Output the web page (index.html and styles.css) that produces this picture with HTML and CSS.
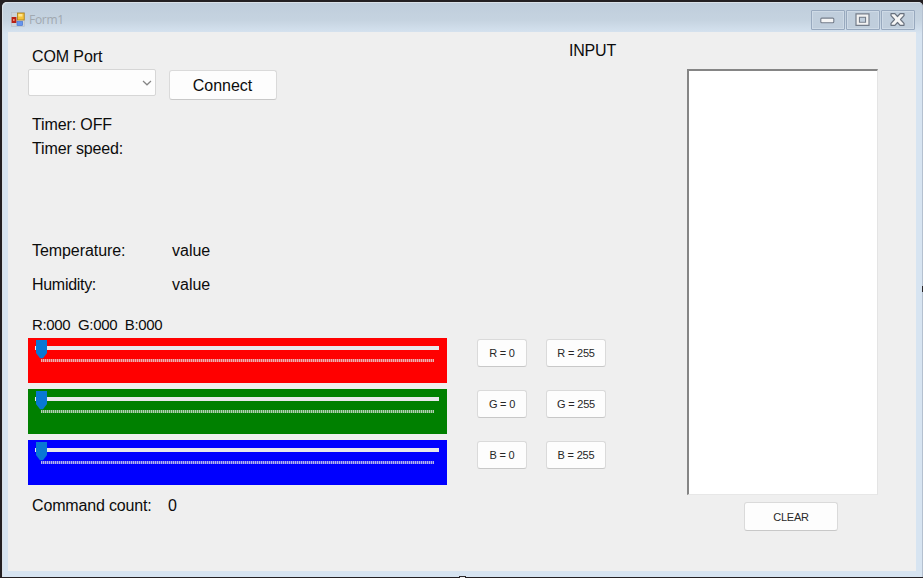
FILE: index.html
```html
<!DOCTYPE html>
<html lang="en">
<head>
<meta charset="utf-8">
<title>Form1</title>
<link rel="stylesheet" href="styles.css">
</head>
<body>
<main class="window">
  <header class="titlebar">
    <svg class="app-icon" width="14" height="15" viewBox="0 0 14 15">
      <rect x=".5" y=".5" width="13" height="14" fill="#ccd3d9" stroke="#b5bec8" stroke-width=".6"/>
      <rect x=".6" y="5" width="4.8" height="6" fill="#b92015"/><rect x="2" y="7" width="1.6" height="2" fill="#ee8b72"/>
      <rect x="6.4" y="1" width="6.8" height="7" fill="#f5c43b" stroke="#a97c17" stroke-width=".8"/><rect x="7.4" y="2" width="4" height="2.5" fill="#ffe58d"/>
      <rect x="6" y="9.5" width="5.6" height="4" fill="#6595ef" stroke="#3d6ed0" stroke-width=".6"/>
    </svg>
    <h1 class="title">Form1</h1>
    <div class="controls">
      <span class="control"><svg width="34" height="20" viewBox="0 0 34 20"><rect x="9.8" y="8.1" width="13" height="4.6" rx="1" fill="#f5f5f5" stroke="#747d8a" stroke-width="1.1"/></svg></span>
      <span class="control"><svg width="34" height="20" viewBox="0 0 34 20"><path d="M10 3.8h13v11.6H10z M13.5 7.3v4.8h6V7.3z" fill="#f2f2f2" fill-rule="evenodd" stroke="#747d8a" stroke-width="1.2"/><rect x="14" y="7.8" width="5" height="3.8" fill="#c0cedc"/></svg></span>
      <span class="control"><svg width="34" height="20" viewBox="0 0 34 20"><path d="M10 3.7h3.9l2.6 2.8 2.6-2.8H23v2l-3.5 3.8 3.5 3.8v2h-3.9l-2.6-2.8-2.6 2.8H10v-2l3.5-3.8L10 5.7z" fill="#f5f5f5" stroke="#68717e" stroke-width="1.2" stroke-linejoin="round"/></svg></span>
    </div>
  </header>
  <div class="client">
    <section class="left">
      <div class="port-row">
        <div class="port">
          <span class="label port-label">COM Port</span>
          <div class="combo"><svg width="10" height="6" viewBox="0 0 10 6"><path d="M1 1l4 3.8L9 1" fill="none" stroke="#858585" stroke-width="1.2"/></svg></div>
        </div>
        <button class="button connect">Connect</button>
      </div>
      <div class="timer">
        <span class="label timer-state">Timer: OFF</span>
        <span class="label timer-speed">Timer speed:</span>
      </div>
      <div class="sensors">
        <span class="label temperature">Temperature:</span><span class="label value">value</span>
        <span class="label humidity">Humidity:</span><span class="label value">value</span>
      </div>
      <div class="rgb">R:000&nbsp; G:000&nbsp; B:000</div>
      <div class="channels">
        <div class="channel">
          <div class="slider red"><div class="rail"></div><svg class="thumb" width="11" height="19" viewBox="0 0 11 19"><path d="M0 0h11v13l-4 5.3H4L0 13z" fill="#0878d4"/></svg><div class="ticks"></div></div>
          <button class="button small zero">R = 0</button><button class="button small full">R = 255</button>
        </div>
        <div class="channel">
          <div class="slider green"><div class="rail"></div><svg class="thumb" width="11" height="19" viewBox="0 0 11 19"><path d="M0 0h11v13l-4 5.3H4L0 13z" fill="#0878d4"/></svg><div class="ticks"></div></div>
          <button class="button small zero">G = 0</button><button class="button small full">G = 255</button>
        </div>
        <div class="channel">
          <div class="slider blue"><div class="rail"></div><svg class="thumb" width="11" height="19" viewBox="0 0 11 19"><path d="M0 0h11v13l-4 5.3H4L0 13z" fill="#0878d4"/></svg><div class="ticks"></div></div>
          <button class="button small zero">B = 0</button><button class="button small full">B = 255</button>
        </div>
      </div>
      <div class="count"><span class="label count-label">Command count:</span><span class="label">0</span></div>
    </section>
    <section class="right">
      <span class="label input-label">INPUT</span>
      <div class="textbox"></div>
      <button class="button clear">CLEAR</button>
    </section>
  </div>
  <i class="handle handle-right"></i>
  <i class="handle handle-bottom"></i>
</main>
</body>
</html>
```
FILE: styles.css
```css
* { box-sizing: border-box; }
body {
  margin: 0;
  width: 923px;
  height: 578px;
  overflow: hidden;
  background: #231f22;
  font-family: "Liberation Sans", Arial, sans-serif;
  color: #0c0c0c;
}
.window {
  position: relative;
  width: 921px;
  height: 575px;
  margin: 2px 0 0 2px;
  padding: 0 7px 6px 6px;
  border-radius: 5px 5px 0 0;
  background: linear-gradient(#bfcddb 0, #c5d3e0 18px, #d7e4f1 32px);
  box-shadow: inset 1px 1px #d9e0e7, inset -1px 0 #b4c0cf;
  display: flex;
  flex-direction: column;
}
.titlebar { height: 30px; flex: none; display: flex; align-items: flex-start; }
.app-icon { margin: 10px 0 0 3px; }
.title {
  margin: 9px 0 0 4px;
  font: 400 12px/18px "Open Sans", sans-serif;
  letter-spacing: -.3px;
  color: #a1a9b1;
}
.controls { display: flex; gap: 1px; margin: 8px 1px 0 auto; }
.control {
  width: 34px;
  height: 20px;
  border: 1px solid #98a9be;
  border-radius: 1px;
  box-shadow: inset 0 0 0 1px #cedae6;
  background: #c0cedc;
}
.control svg { display: block; margin: -1px; }
.client { height: 539px; display: flex; background: #efefef; }
.left { width: 600px; padding-left: 20px; flex: none; }
.label { font-size: 16px; line-height: 20px; white-space: nowrap; }
.port-row { height: 83px; display: flex; padding-top: 15px; }
.port { width: 128px; }
.port-label { display: block; margin-left: 4px; letter-spacing: -.1px; }
.combo {
  height: 27px;
  margin-top: 2px;
  display: flex;
  align-items: center;
  justify-content: flex-end;
  padding-right: 3px;
  border: 1px solid #d6d6d6;
  border-radius: 2px;
  background: #fdfdfd;
}
.button {
  display: block;
  padding: 0;
  border: 1px solid #dadada;
  border-bottom-color: #c8c8c8;
  border-radius: 3px;
  background: #fdfdfd;
  color: #0c0c0c;
  font-family: inherit;
  text-align: center;
  white-space: nowrap;
}
.connect { width: 108px; height: 30px; margin: 23px 0 0 13px; padding: 1px 1px 0 0; font-size: 16px; }
.timer { height: 126px; margin-left: 4px; display: flex; flex-direction: column; gap: 4px; }
.timer-state { letter-spacing: -.12px; }
.timer-speed { letter-spacing: -.14px; }
.temperature { letter-spacing: -.07px; }
.humidity { letter-spacing: -.3px; }
.sensors { margin-left: 4px; display: grid; grid-template-columns: 140px auto; row-gap: 14px; }
.rgb { margin: 19px 0 0 4px; font-size: 15px; line-height: 22px; letter-spacing: -.34px; }
.channels { display: flex; flex-direction: column; gap: 6px; margin-top: 2px; }
.channel { display: flex; align-items: flex-start; }
.slider { width: 419px; height: 45px; padding: 8px 8px 0 7px; position: relative; }
.red { background: #f00; }
.green { background: #008000; }
.blue { background: #00f; }
.rail { height: 4px; background: #e8e8ea; }
.thumb { position: absolute; left: 8px; top: 2px; }
.ticks {
  height: 3px;
  margin: 9px 5px 0 6px;
  background: repeating-linear-gradient(90deg, rgba(230,230,230,.78) 0 1px, rgba(220,220,220,.36) 1px 2px);
}
.small { height: 28px; margin-top: 1px; font-size: 11px; letter-spacing: -.2px; color: #262626; }
.zero { width: 50px; margin-left: 30px; }
.full { width: 60px; margin-left: 19px; }
.count { display: flex; margin: 11px 0 0 4px; }
.count-label { width: 136px; letter-spacing: -.16px; }
.right { width: 270px; display: flex; flex-direction: column; align-items: flex-start; }
.input-label { margin: 9px 0 0 -39px; letter-spacing: -.2px; }
.textbox {
  width: 191px;
  height: 426px;
  margin: 8px 0 0 79px;
  border: solid #858585;
  border-width: 2px 1px 1px 2px;
  border-right-color: #e4e4e4;
  border-bottom-color: #e7e7e7;
  background: #fff;
}
.clear { width: 94px; height: 29px; margin: 7px 0 0 136px; font-size: 11px; letter-spacing: -.2px; color: #292929; }
.handle { position: absolute; background: #2b282b; }
.handle-right { right: 0; top: 284px; width: 1px; height: 6px; }
.handle-bottom { left: 457px; bottom: -1px; width: 7px; height: 2px; border: solid #2b282b; border-width: 1px 1px 0; background: #eee; }
```
